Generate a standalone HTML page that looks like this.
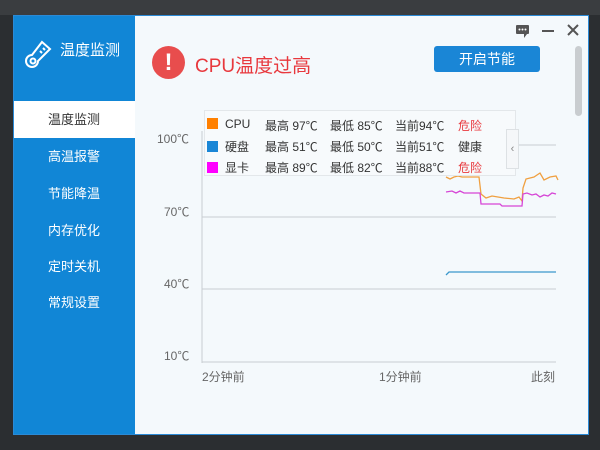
<!DOCTYPE html>
<html><head><meta charset="utf-8"><style>
*{margin:0;padding:0;box-sizing:border-box}
body{width:600px;height:450px;overflow:hidden;background:#2b2e31;font-family:"Liberation Sans","Noto Sans CJK SC",sans-serif;position:relative}
.topbar{position:absolute;left:0;top:0;width:600px;height:15px;background:#3a3d40}
.win{position:absolute;left:13px;top:15px;width:576px;height:420px;background:#f4f9fc;border:1px solid #2b8ad6}
.side{position:absolute;left:0;top:0;width:121px;height:418px;background:#1186d6}
.logo{position:absolute;left:46px;top:23px;color:#fff;font-size:15px}
.nav{position:absolute;left:0;width:121px;height:37px;line-height:37px;color:#fff;font-size:13px;padding-left:34px}
.nav.act{background:#fff;color:#333}
.t{position:absolute;font-size:12px;color:#333;white-space:nowrap}
.ax{position:absolute;font-size:12px;color:#666}
</style></head><body>
<div class="topbar"></div>
<div class="win">
 <div class="side">
  <svg style="position:absolute;left:10px;top:23px" width="30" height="32" viewBox="0 0 30 32" fill="none" stroke="#fff" stroke-width="2"><path d="M18 3 L26 10 L14 22 A6 6 0 1 1 8 16 Z"/><circle cx="9" cy="22" r="2.5"/><path d="M19 9l2 2M16 12l2 2"/></svg>
  <div class="logo">温度监测</div>
  <div class="nav act" style="top:85px">温度监测</div>
  <div class="nav" style="top:122px">高温报警</div>
  <div class="nav" style="top:159px">节能降温</div>
  <div class="nav" style="top:196px">内存优化</div>
  <div class="nav" style="top:232px">定时关机</div>
  <div class="nav" style="top:268px">常规设置</div>
 </div>
 <svg style="position:absolute;left:500px;top:5px" width="70" height="20"><rect x="2" y="4" width="13" height="9" rx="1" fill="#555"/><path d="M10 13l0 4 3-4z" fill="#555"/><circle cx="5.5" cy="8.5" r="1" fill="#fff"/><circle cx="8.5" cy="8.5" r="1" fill="#fff"/><circle cx="11.5" cy="8.5" r="1" fill="#fff"/><path d="M28 10h12" stroke="#555" stroke-width="2"/><path d="M54 4l10 10M64 4l-10 10" stroke="#555" stroke-width="2"/></svg>
 <div style="position:absolute;left:138px;top:30px;width:33px;height:33px;border-radius:50%;background:#e84d4d;color:#fff;font-size:24px;font-weight:bold;text-align:center;line-height:33px">!</div>
 <div style="position:absolute;left:181px;top:35px;color:#e8383d;font-size:19px">CPU温度过高</div>
 <div style="position:absolute;left:420px;top:30px;width:106px;height:26px;background:#1a86d6;border-radius:3px;color:#fff;font-size:14px;text-align:center;line-height:26px">开启节能</div>
 <div style="position:absolute;left:561px;top:30px;width:7px;height:70px;border-radius:4px;background:#c9cdd0"></div>
 <svg style="position:absolute;left:0;top:0" width="576" height="420">
  <line x1="188" y1="115" x2="188" y2="347" stroke="#c8cdd2"/>
  <line x1="495" y1="129" x2="542" y2="129" stroke="#c8cdd2"/>
  <line x1="188" y1="201" x2="542" y2="201" stroke="#c8cdd2"/>
  <line x1="188" y1="273" x2="542" y2="273" stroke="#c8cdd2"/>
  <line x1="188" y1="346" x2="542" y2="346" stroke="#c8cdd2"/>
  <polyline fill="none" stroke="#f0a040" stroke-width="1.3" points="432,161 436,163 440,161 444,160 448,161 465,161 467,178 472,182 478,180 490,182 500,183 505,181 508,185 509,172 512,163 520,161 526,157 530,164 536,161 542,160 544,164"/>
  <polyline fill="none" stroke="#d646d6" stroke-width="1.3" points="432,176 438,175 442,177 446,175 450,177 466,177 467,188 486,188 488,190 508,190 509,178 513,177 518,179 522,178 526,181 530,179 534,180 538,177 542,178"/>
  <polyline fill="none" stroke="#3a98cc" stroke-width="1.3" points="432,259 435,256 542,256"/>
 </svg>
 <div style="position:absolute;left:190px;top:94px;width:312px;height:66px;background:#f7fafc;border:1px solid #e3e7ea"></div>
 <div style="position:absolute;left:492px;top:113px;width:13px;height:40px;background:#f5f7f9;border:1px solid #dde1e4;color:#888;font-size:11px;line-height:38px;text-align:center">‹</div>
 <div class="t" style="left:193px;top:101px"><span style="display:inline-block;width:11px;height:11px;background:#ff8000;vertical-align:-1px;margin-right:7px"></span>CPU</div>
 <div class="t" style="left:193px;top:122px"><span style="display:inline-block;width:11px;height:11px;background:#1a86d6;vertical-align:-1px;margin-right:7px"></span>硬盘</div>
 <div class="t" style="left:193px;top:143px"><span style="display:inline-block;width:11px;height:11px;background:#ff00ff;vertical-align:-1px;margin-right:7px"></span>显卡</div>
 <div class="t" style="left:251px;top:101px">最高 97℃</div><div class="t" style="left:316px;top:101px">最低 85℃</div><div class="t" style="left:381px;top:101px">当前94℃</div><div class="t" style="left:444px;top:101px;color:#e8383d">危险</div>
 <div class="t" style="left:251px;top:122px">最高 51℃</div><div class="t" style="left:316px;top:122px">最低 50℃</div><div class="t" style="left:381px;top:122px">当前51℃</div><div class="t" style="left:444px;top:122px">健康</div>
 <div class="t" style="left:251px;top:143px">最高 89℃</div><div class="t" style="left:316px;top:143px">最低 82℃</div><div class="t" style="left:381px;top:143px">当前88℃</div><div class="t" style="left:444px;top:143px;color:#e8383d">危险</div>
 <div class="ax" style="left:143px;top:114px">100℃</div>
 <div class="ax" style="left:150px;top:187px">70℃</div>
 <div class="ax" style="left:150px;top:259px">40℃</div>
 <div class="ax" style="left:150px;top:331px">10℃</div>
 <div class="ax" style="left:188px;top:352px">2分钟前</div>
 <div class="ax" style="left:365px;top:352px">1分钟前</div>
 <div class="ax" style="left:517px;top:352px">此刻</div>
</div>
</body></html>
